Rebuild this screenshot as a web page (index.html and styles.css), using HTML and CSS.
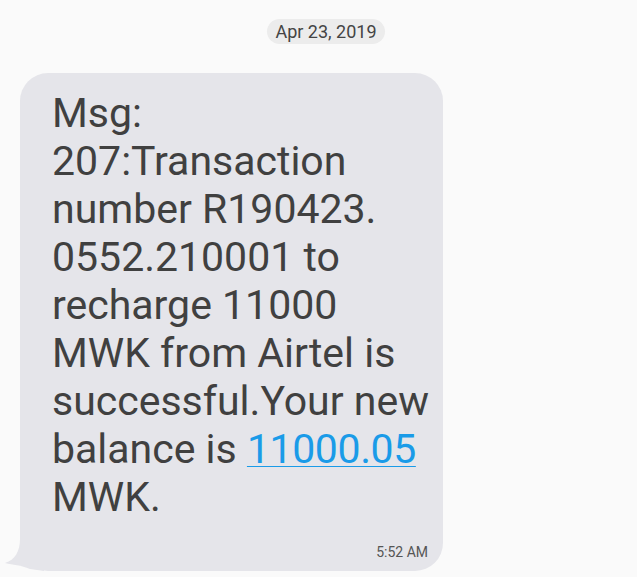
FILE: index.html
```html
<!DOCTYPE html>
<html lang="en">
<head>
  <meta charset="UTF-8">
  <meta name="viewport" content="width=device-width, initial-scale=1.0">
  <title>Messages</title>
  <link rel="stylesheet" href="styles.css">
</head>
<body>
  <div class="thread">
    <div class="date-row">
      <span class="date-pill">Apr 23, 2019</span>
    </div>
    <div class="bubble">
      <svg class="tail" width="40" height="40" viewBox="0 0 40 40">
        <path d="M16 0 L16 8 C16 20 11 29 1 32 C9 34 17 34 26 38 L40 40 L40 0 Z" fill="#e5e5ea"/>
      </svg>
      <div class="msg-text">Msg: 207:Transaction number R190423. 0552.210001 to recharge 11000 MWK from Airtel is successful.Your new balance is <a href="#">11000.05</a> MWK.</div>
      <div class="msg-time">5:52 AM</div>
    </div>
  </div>
</body>
</html>
```

FILE: styles.css
```css
body {
  font-family: Roboto, 'Noto Sans', Arial, sans-serif;
  background: #fafafa;
  color: #444;
  margin: 0;
  padding: 0;
}
.thread {
  display: flex;
  flex-direction: column;
  padding-top: 19px;
}
.date-row {
  display: flex;
  justify-content: center;
  padding-left: 15px;
}
.date-pill {
  background: #ececec;
  color: #444;
  font-size: 18px;
  line-height: 25px;
  padding: 0 8px;
  border-radius: 13px;
}
.bubble {
  position: relative;
  background: #e5e5ea;
  border-radius: 28px;
  margin: 29px 0 0 20px;
  width: 380px;
  padding: 16px 11px 11px 32px;
}
.tail {
  position: absolute;
  left: -16px;
  bottom: 0;
}
.msg-text {
  font-size: 41px;
  line-height: 48px;
  color: #404040;
}
.msg-text a {
  color: #1a9be8;
  letter-spacing: -0.4px;
  text-decoration: underline;
  text-decoration-thickness: 1px;
  text-underline-offset: 3px;
}
.msg-time {
  text-align: right;
  font-size: 14px;
  line-height: 16px;
  color: #555;
  margin-top: 23px;
  padding-right: 4px;
}
```
